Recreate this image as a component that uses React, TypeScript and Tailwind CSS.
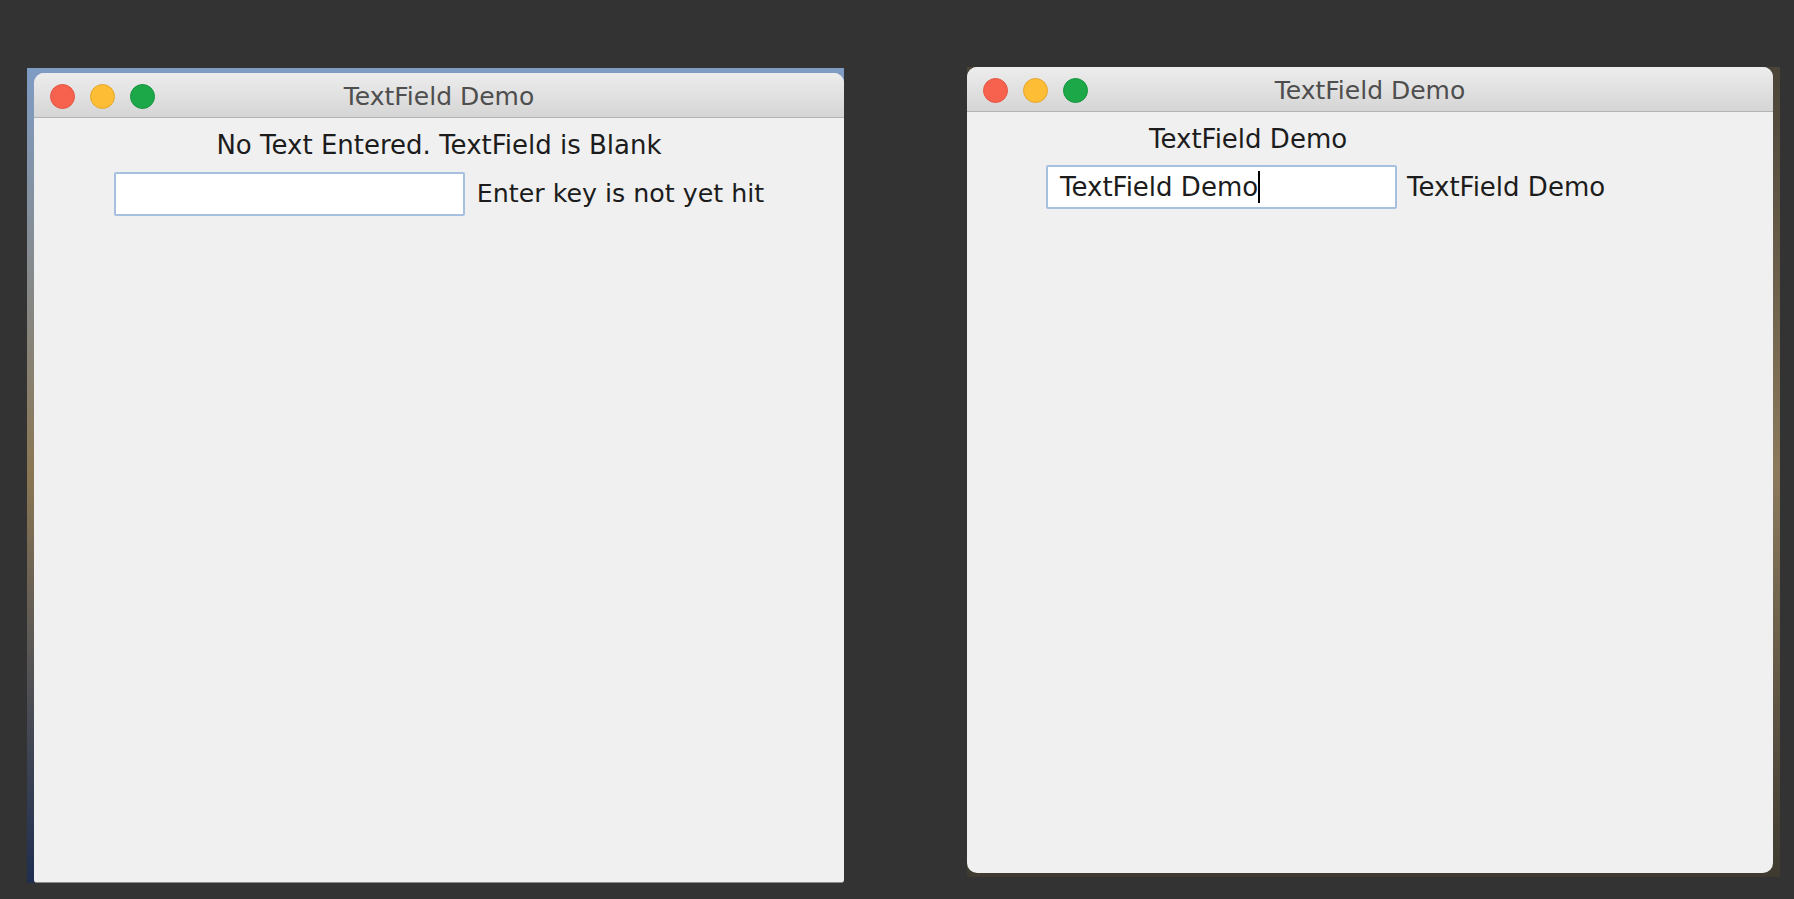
import React from 'react';

const font = { fontFamily: '"DejaVu Sans", "Liberation Sans", sans-serif' };

function TrafficLights() {
  return (
    <div className="flex items-center gap-[15px]">
      <span className="w-[25px] h-[25px] rounded-full bg-[#f7624f] border border-[#e45544]" />
      <span className="w-[25px] h-[25px] rounded-full bg-[#fdbd35] border border-[#e5a62c]" />
      <span className="w-[25px] h-[25px] rounded-full bg-[#1ca848] border border-[#16943e]" />
    </div>
  );
}

function TitleBar({ title }: { title: string }) {
  return (
    <div className="relative h-[45px] shrink-0 flex items-center pl-[16px] pt-[3px] bg-gradient-to-b from-[#ededed] to-[#d5d5d5] border-b border-[#b3b3b3] rounded-t-[10px]">
      <TrafficLights />
      <div className="absolute inset-0 pt-[4px] flex items-center justify-center text-[25px] text-[#4e4e4e] pointer-events-none">
        {title}
      </div>
    </div>
  );
}

function TextField({ value, caret }: { value: string; caret?: boolean }) {
  return (
    <div className="w-[351px] h-[44px] shrink-0 bg-white border-2 border-[#a8c0e0] rounded-[2px] flex items-center pl-[12px] text-[26px] text-[#1c1c1c]">
      <span>{value}</span>
      {caret && <span className="w-[2px] h-[32px] bg-black" />}
    </div>
  );
}

export default function App() {
  return (
    <div
      className="w-[1794px] h-[899px] bg-[#333333] flex items-start pl-[27px] gap-[123px] overflow-hidden"
      style={font}
    >
      {/* left window with a sliver of wallpaper showing on top / left */}
      <div className="mt-[68px] pl-[7px] pt-[5px] bg-gradient-to-b from-[#7f9cc4] via-[#8a7652] to-[#1f2d4f]">
        <div className="w-[810px] h-[810px] flex flex-col bg-[#f0f0f0] rounded-t-[10px] rounded-b-[3px] border-b border-[#8c8c8c]">
          <TitleBar title="TextField Demo" />
          <div className="flex flex-col items-center pt-[10px] gap-[10px] text-[26px] text-[#1c1c1c]">
            <div className="h-[34px] leading-[34px]">No Text Entered. TextField is Blank</div>
            <div className="flex items-center gap-[12px]">
              <TextField value="" />
              <span className="text-[25.3px]">Enter key is not yet hit</span>
            </div>
          </div>
        </div>
      </div>

      {/* right window with wallpaper sliver on right / bottom */}
      <div className="mt-[67px] pr-[7px] pb-[4px] bg-gradient-to-b from-[#4a4438] via-[#8c7a5c] to-[#3e3a30]">
        <div className="w-[806px] h-[806px] flex flex-col bg-[#f0f0f0] rounded-[10px]">
          <TitleBar title="TextField Demo" />
          <div className="flex flex-col pt-[10px] gap-[9px] text-[26px] text-[#1c1c1c]">
            <div className="h-[34px] leading-[34px] pl-[182px]">TextField Demo</div>
            <div className="flex items-center gap-[10px] pl-[79px]">
              <TextField value="TextField Demo" caret />
              <span>TextField Demo</span>
            </div>
          </div>
        </div>
      </div>
    </div>
  );
}
